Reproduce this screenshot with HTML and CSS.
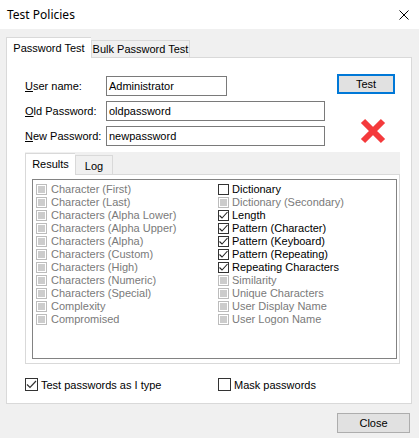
FILE: index.html
```html
<!DOCTYPE html>
<html>
<head>
<meta charset="utf-8">
<link rel="stylesheet" href="styles.css">
</head>
<body>
<div class="window">
  <div class="titlebar">
    <span class="title">Test Policies</span>
    <svg class="close-x" width="10" height="10" viewBox="0 0 10 10"><path d="M0.5 0.5 L9.5 9.5 M9.5 0.5 L0.5 9.5" stroke="#000" stroke-width="1" fill="none"/></svg>
  </div>
  <div class="content">
    <div class="tabs">
      <div class="tab tab-active">Password Test</div>
      <div class="tab">Bulk Password Test</div>
    </div>
    <div class="page">
      <div class="form">
        <div class="fields">
          <div class="row"><label class="lbl"><u>U</u>ser name:</label><div class="input input-short">Administrator</div></div>
          <div class="row"><label class="lbl"><u>O</u>ld Password:</label><div class="input input-long">oldpassword</div></div>
          <div class="row"><label class="lbl"><u>N</u>ew Password:</label><div class="input input-long">newpassword</div></div>
        </div>
        <div class="side">
          <div class="btn btn-default">Test</div>
          <svg class="redx" width="26" height="26" viewBox="0 0 26 26"><path d="M3 3 L23 23 M23 3 L3 23" stroke="#f43a3c" stroke-width="6" fill="none"/></svg>
        </div>
      </div>
      <div class="itabs">
        <div class="itab-strip">
          <div class="itab itab-active">Results</div>
          <div class="itab">Log</div>
        </div>
        <div class="ipanel">
          <div class="list">
            <div class="col col-left">
              <div class="item dis"><span class="cb cb-dis"></span>Character (First)</div>
              <div class="item dis"><span class="cb cb-dis"></span>Character (Last)</div>
              <div class="item dis"><span class="cb cb-dis"></span>Characters (Alpha Lower)</div>
              <div class="item dis"><span class="cb cb-dis"></span>Characters (Alpha Upper)</div>
              <div class="item dis"><span class="cb cb-dis"></span>Characters (Alpha)</div>
              <div class="item dis"><span class="cb cb-dis"></span>Characters (Custom)</div>
              <div class="item dis"><span class="cb cb-dis"></span>Characters (High)</div>
              <div class="item dis"><span class="cb cb-dis"></span>Characters (Numeric)</div>
              <div class="item dis"><span class="cb cb-dis"></span>Characters (Special)</div>
              <div class="item dis"><span class="cb cb-dis"></span>Complexity</div>
              <div class="item dis"><span class="cb cb-dis"></span>Compromised</div>
            </div>
            <div class="col col-right">
              <div class="item"><span class="cb"></span>Dictionary</div>
              <div class="item dis"><span class="cb cb-dis"></span>Dictionary (Secondary)</div>
              <div class="item"><span class="cb"><svg width="11" height="11" viewBox="0 0 11 11"><path d="M1.5 5.5 L4 8 L9.5 2" stroke="#222" stroke-width="1.1" fill="none"/></svg></span>Length</div>
              <div class="item"><span class="cb"><svg width="11" height="11" viewBox="0 0 11 11"><path d="M1.5 5.5 L4 8 L9.5 2" stroke="#222" stroke-width="1.1" fill="none"/></svg></span>Pattern (Character)</div>
              <div class="item"><span class="cb"><svg width="11" height="11" viewBox="0 0 11 11"><path d="M1.5 5.5 L4 8 L9.5 2" stroke="#222" stroke-width="1.1" fill="none"/></svg></span>Pattern (Keyboard)</div>
              <div class="item"><span class="cb"><svg width="11" height="11" viewBox="0 0 11 11"><path d="M1.5 5.5 L4 8 L9.5 2" stroke="#222" stroke-width="1.1" fill="none"/></svg></span>Pattern (Repeating)</div>
              <div class="item"><span class="cb"><svg width="11" height="11" viewBox="0 0 11 11"><path d="M1.5 5.5 L4 8 L9.5 2" stroke="#222" stroke-width="1.1" fill="none"/></svg></span>Repeating Characters</div>
              <div class="item dis"><span class="cb cb-dis"></span>Similarity</div>
              <div class="item dis"><span class="cb cb-dis"></span>Unique Characters</div>
              <div class="item dis"><span class="cb cb-dis"></span>User Display Name</div>
              <div class="item dis"><span class="cb cb-dis"></span>User Logon Name</div>
            </div>
          </div>
        </div>
      </div>
      <div class="options">
        <div class="opt opt-left"><span class="cb cb-big"><svg width="13" height="13" viewBox="0 0 13 13"><path d="M2 6.5 L5 9.5 L11 3" stroke="#333" stroke-width="1.2" fill="none"/></svg></span>Test passwords as I type</div>
        <div class="opt"><span class="cb cb-big"></span>Mask passwords</div>
      </div>
    </div>
    <div class="footer">
      <div class="btn btn-close">Close</div>
    </div>
  </div>
</div>
</body>
</html>
```

FILE: styles.css
```css
* { box-sizing: border-box; }
html, body { margin: 0; padding: 0; }
body {
  width: 419px;
  height: 438px;
  background: #f0f0f0;
  font-family: "Liberation Sans", Arial, sans-serif;
  font-size: 11px;
  color: #000;
  overflow: hidden;
}
.titlebar {
  height: 29px;
  background: #fff;
  display: flex;
  align-items: center;
  justify-content: space-between;
  padding: 0 10px 0 7px;
}
.title {
  font-family: "Noto Sans", "Open Sans", sans-serif;
  font-size: 12px;
  margin-top: -1px;
}
.content {
  padding: 8px 7px 0 6px;
}
.tabs {
  display: flex;
  align-items: flex-end;
  height: 20px;
}
.tab {
  height: 17px;
  border: 1px solid #d9d9d9;
  border-bottom: none;
  background: #f0f0f0;
  padding: 0;
  display: flex;
  align-items: center;
  width: 99px;
  justify-content: center;
  white-space: nowrap;
}
.tab-active {
  height: 21px;
  width: 85px;
  background: #fff;
  margin-bottom: -1px;
  position: relative;
  z-index: 1;
  border-right: none;
  padding-bottom: 1px;
}
.page {
  height: 347px;
  background: #fff;
  border: 1px solid #d9d9d9;
  padding: 16px 0 0 18px;
}
.form {
  display: flex;
  align-items: flex-start;
}
.fields {
  display: flex;
  flex-direction: column;
  gap: 5px;
  margin-top: 2px;
}
.row {
  display: flex;
  align-items: center;
  height: 20px;
}
.lbl {
  width: 81px;
}
.lbl u { text-decoration: underline; text-underline-offset: 1px; }
.input {
  height: 20px;
  border: 1px solid #7a7a7a;
  padding: 0 2px;
  display: flex;
  align-items: center;
}
.input-short { width: 121px; }
.input-long { width: 219px; }
.side {
  margin-left: 12px;
  display: flex;
  flex-direction: column;
}
.btn {
  height: 20px;
  background: #e1e1e1;
  border: 1px solid #adadad;
  display: flex;
  align-items: center;
  justify-content: center;
}
.btn-default {
  width: 58px;
  border: 2px solid #0078d7;
}
.redx {
  margin: 24px 0 0 23px;
}
.itabs {
  margin-top: 6px;
  width: 375px;
}
.itab-strip {
  height: 22px;
  background: #f0f0f0;
  display: flex;
  align-items: flex-end;
}
.itab {
  height: 19px;
  width: 38px;
  border: 1px solid #d9d9d9;
  border-bottom: none;
  background: #f0f0f0;
  display: flex;
  align-items: center;
  justify-content: center;
  padding-top: 2px;
}
.itab-active {
  width: 50px;
  height: 22px;
  background: #fff;
  margin-bottom: -1px;
  position: relative;
  z-index: 1;
  border-right: none;
  padding-top: 0;
  padding-bottom: 2px;
}
.ipanel {
  height: 190px;
  border: 1px solid #d9d9d9;
  background: #fff;
  padding: 4px 2px 0 6px;
}
.list {
  height: 180px;
  border: 1px solid #828282;
  display: flex;
  padding: 3px 0 0 3px;
}
.col {
  display: flex;
  flex-direction: column;
}
.col-left { width: 182px; }
.item {
  height: 13px;
  display: flex;
  align-items: center;
  white-space: nowrap;
  line-height: 13px;
}
.col-left .item .cb { margin-right: 4px; }
.col-right .item .cb { margin-right: 3px; }
.dis { color: #7a7a7a; }
.cb {
  width: 11px;
  height: 11px;
  border: 1px solid #333;
  background: #fff;
  flex: none;
  display: flex;
  align-items: center;
  justify-content: center;
}
.cb svg { display: block; flex: none; }
.cb-dis {
  border-color: #bcbcbc;
  padding: 1px;
}
.cb-dis::after {
  content: "";
  display: block;
  width: 7px;
  height: 7px;
  background: #cccccc;
}
.options {
  display: flex;
  margin-top: 14px;
  height: 13px;
}
.opt {
  display: flex;
  align-items: center;
  white-space: nowrap;
}
.opt-left { width: 193px; }
.cb-big {
  width: 13px;
  height: 13px;
  margin-right: 3px;
}
.footer {
  display: flex;
  justify-content: flex-end;
  padding-top: 9px;
  padding-right: 2px;
}
.btn-close { width: 73px; }
```
